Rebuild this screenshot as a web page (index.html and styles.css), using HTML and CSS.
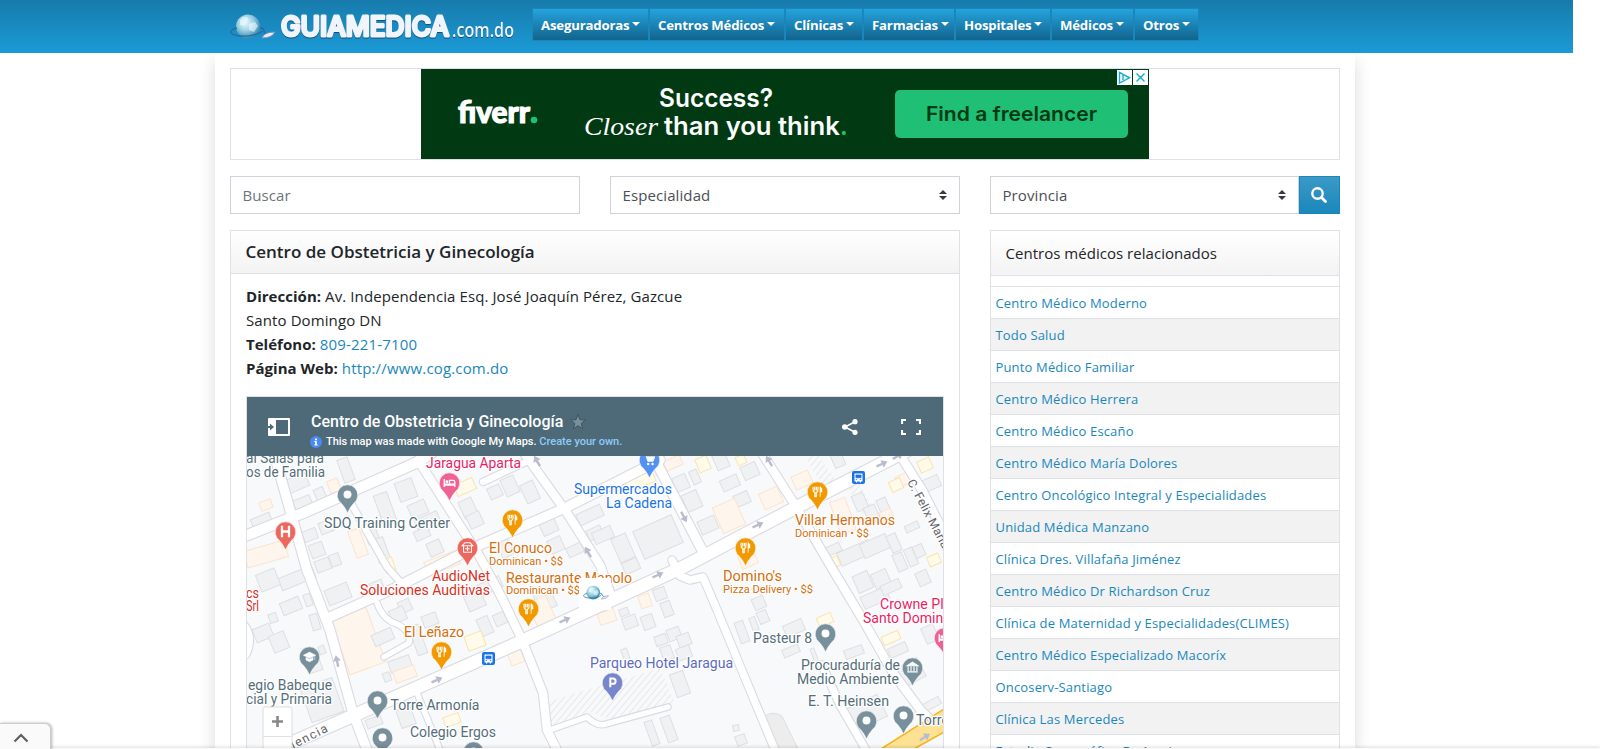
FILE: index.html
```html
<!DOCTYPE html>
<html lang="es">
<head>
<meta charset="utf-8">
<title>Centro de Obstetricia y Ginecología - GuiaMedica.com.do</title>
<link rel="stylesheet" href="styles.css">
</head>
<body>
<div class="page">
<header class="topbar">
  <svg class="logo" width="303" height="53" viewBox="0 0 303 53">
    <defs>
      <linearGradient id="lg" x1="0" y1="0" x2="0" y2="1"><stop offset="0" stop-color="#fff"/><stop offset="1" stop-color="#dbe4f3"/></linearGradient>
      <radialGradient id="globe" cx=".4" cy=".35" r=".7"><stop offset="0" stop-color="#e8f8fb"/><stop offset=".45" stop-color="#9fd3e6"/><stop offset="1" stop-color="#2a7fa8"/></radialGradient>
    </defs>
    <g id="emblem">
      <circle cx="18" cy="26.500" r="12" fill="url(#globe)"/>
      <path d="M10 20q3-4 7-3l2 3-4 2-1 4-4-1zM19 24l6-2 3 4-4 6-5-2z" fill="#f1fbfd" opacity=".6"/>
      <path d="M7 28C-2 30-1 35 10 36S31 33 32 31M30 28q4 0 4 3t6 3" fill="none" stroke="#256c9c" stroke-width="1.300"/>
      <path d="M32 38Q34 32 45 32Q42 38 32 38Z" fill="#e8edf9" stroke="#7d8fc2"/>
    </g>
    <text class="logo-name" x="51" y="36" textLength="168" lengthAdjust="spacingAndGlyphs">GUIAMEDICA</text>
    <text class="logo-tld" x="222" y="37" textLength="62" lengthAdjust="spacingAndGlyphs">.com.do</text>
  </svg>
  <nav class="nav">
    <a class="n1">Aseguradoras</a><a class="n2">Centros Médicos</a><a class="n3">Clínicas</a><a class="n4">Farmacias</a><a class="n5">Hospitales</a><a class="n6">Médicos</a><a class="n7">Otros</a>
  </nav>
</header>
<main class="container">
  <div class="adbox">
    <svg width="728" height="90" viewBox="0 0 728 90">
      <rect width="728" height="90" fill="#003912"/>
      <g fill="#fff">
        <text class="fiverr" x="37" y="54" textLength="72" lengthAdjust="spacingAndGlyphs">fiverr</text>
        <circle cx="113" cy="51" r="3.300" fill="#1dbf73"/>
        <text class="slogan" x="238" y="38" textLength="114" lengthAdjust="spacingAndGlyphs">Success?</text>
        <text class="closer" x="163" y="66" textLength="74" lengthAdjust="spacingAndGlyphs">Closer</text>
        <text class="slogan" x="243" y="66" textLength="184" lengthAdjust="spacingAndGlyphs">than you think<tspan fill="#1dbf73">.</tspan></text>
      </g>
      <rect x="474" y="21" width="233" height="48" rx="5" fill="#1fbf75"/>
      <text class="cta" x="505" y="52" textLength="171" lengthAdjust="spacingAndGlyphs">Find a freelancer</text>
      <path d="M696 1h15v15h-15zM712 1h15v15h-15z" fill="#fff"/>
      <path d="M698.500 3.500v10.500l10-5.200zM702 6v5M715.500 4.500l8 8M723.500 4.500l-8 8" fill="none" stroke="#10aed2" stroke-width="1.400"/>
    </svg>
  </div>
  <div class="grid">
    <div class="field ph">Buscar</div>
    <div class="field">Especialidad<svg width="8" height="10" viewBox="0 0 4 5"><path fill="#343a40" d="M2 0L0 2h4zm0 5L0 3h4z"/></svg></div>
    <div class="group">
      <div class="field">Provincia<svg width="8" height="10" viewBox="0 0 4 5"><path fill="#343a40" d="M2 0L0 2h4zm0 5L0 3h4z"/></svg></div>
      <button class="search" aria-label="Buscar"><svg width="16" height="16" viewBox="0 0 16 16"><circle cx="6.500" cy="6.500" r="5.200" fill="none" stroke="#fff" stroke-width="2.400"/><path d="M10.500 10.500l4 4" stroke="#fff" stroke-width="2.800" stroke-linecap="round"/></svg></button>
    </div>
    <section class="card main-card">
      <h1>Centro de Obstetricia y Ginecología</h1>
      <div class="info">
        <p><b>Dirección:</b> <span class="addr">Av. Independencia Esq. José Joaquín Pérez, Gazcue</span></p>
        <p>Santo Domingo DN</p>
        <p><b>Teléfono:</b> <a>809-221-7100</a></p>
        <p><b>Página Web:</b> <a>http://www.cog.com.do</a></p>
        <div class="mapframe">
          <div class="maphead">
            <svg class="panel-ico" width="22" height="18" viewBox="0 0 22 18"><path d="M1 0h20q1 0 1 1v16q0 1-1 1H1q-1 0-1-1V1q0-1 1-1zm7 2v14h12V2z" fill="#fff" fill-rule="evenodd"/><path d="M0 8h2V5.500L6 9l-4 3.500V10H0z" fill="#4e6a78"/></svg>
            <div class="maptitle">
              <div class="mt">Centro de Obstetricia y Ginecología<svg width="16" height="16" viewBox="0 0 16 16"><path d="M8 .5l2 5.200 5.500.3-4.300 3.400 1.400 5.400L8 11.700l-4.600 3.100 1.400-5.400L.5 6 6 5.700z" fill="#78909c" stroke="#3f5561"/></svg></div>
              <div class="ms"><svg width="12" height="12" viewBox="0 0 12 12"><circle cx="6" cy="6" r="6" fill="#4a8af4"/><path d="M5 2.500h2v1.700H5zM4.300 5h2.500v3.500h.9v1H4.300v-1h.8V6h-.8z" fill="#fff"/></svg>This map was made with Google My Maps. <span>Create your own.</span></div>
            </div>
            <svg class="share" width="16" height="16" viewBox="0 0 16 16"><path d="M13 2.700L3 8l10 5.300" fill="none" stroke="#fff" stroke-width="1.600"/><g fill="#fff"><circle cx="13" cy="2.700" r="2.600"/><circle cx="2.800" cy="8" r="2.800"/><circle cx="13" cy="13.300" r="2.600"/></g></svg>
            <svg class="full" width="20" height="16" viewBox="0 0 20 16"><path d="M1 5V1h4M15 1h4v4M19 11v4h-4M5 15H1v-4" fill="none" stroke="#fff" stroke-width="2.200"/></svg>
          </div>
          <svg id="map" width="696" height="293" viewBox="247 456 696 293"></svg>
        </div>
      </div>
    </section>
    <aside class="card side-card">
      <h2>Centros médicos relacionados</h2>
      <ul>
        <li>Centro Médico Moderno</li><li>Todo Salud</li><li>Punto Médico Familiar</li><li>Centro Médico Herrera</li><li>Centro Médico Escaño</li><li>Centro Médico María Dolores</li><li>Centro Oncológico Integral y Especialidades</li><li>Unidad Médica Manzano</li><li>Clínica Dres. Villafaña Jiménez</li><li>Centro Médico Dr Richardson Cruz</li><li>Clínica de Maternidad y Especialidades(CLIMES)</li><li>Centro Médico Especializado Macoríx</li><li>Oncoserv-Santiago</li><li>Clínica Las Mercedes</li><li>Estudio Sonográfico Dr Arroja</li>
      </ul>
    </aside>
  </div>
</main>
</div>
<div class="anchor-tab"><svg width="16" height="10" viewBox="0 0 16 10"><path d="M1.500 8.500L8 2l6.500 6.500" fill="none" stroke="#5f5f5f" stroke-width="2.200"/></svg></div>
<div class="anchor-bar"></div>
<script src="map.js"></script>
</body>
</html>
```

FILE: styles.css
```css
* { box-sizing: border-box; }
html, body { height: 749px; overflow: hidden; }
body { margin: 0; background: #fff; color: #212529; font: 15px/24px "Open Sans", "Noto Sans", sans-serif; letter-spacing: .1px; }
.page { width: 1573px; height: 749px; overflow: hidden; }
.topbar { position: relative; z-index: 2; height: 53px; padding-left: 230px; display: flex; align-items: flex-start; background: linear-gradient(#177bab, #1b9ad6); letter-spacing: 0; }
.logo { display: block; flex: none; }
.logo-name { font: 500 27px Inter, sans-serif; fill: url(#lg); stroke: #f0f4fb; stroke-width: 3; stroke-linejoin: round; filter: drop-shadow(0 1.5px .7px #134f7d); }
.logo-tld { font: 600 20px "Open Sans", sans-serif; fill: #eef3fc; filter: drop-shadow(0 1px .6px #134f7d); }
.nav { display: flex; gap: 2px; margin-top: 9px; }
.nav a { height: 31px; padding-left: 8px; display: flex; align-items: center; color: #fff; font-size: 13.2px; font-weight: 700; letter-spacing: -.18px; white-space: nowrap; background: linear-gradient(#25a3de, #12648d); box-shadow: 0 0 0 1px #1a87bb; }
.nav a::after { content: ""; margin: -2px 0 0 3px; border: 4px solid transparent; border-top-color: #fff; border-bottom: 0; }
.n1 { width: 115px; } .n2 { width: 134px; } .n3 { width: 76px; } .n4 { width: 90px; } .n5 { width: 94px; } .n6 { width: 81px; } .n7 { width: 63px; }
.container { width: 1140px; height: 696px; margin-left: 215px; padding: 15px 15px 0; background: #fff; box-shadow: 0 8px 16px rgba(0,0,0,.15); }
.adbox { height: 92px; border: 1px solid #dee2e6; display: flex; padding-left: 190px; letter-spacing: 0; }
.fiverr { font: 900 31px Lato, sans-serif; stroke: #fff; stroke-width: 1.2; }
.slogan { font: 600 25px Inter, sans-serif; }
.closer { font: italic 26px "Liberation Serif", serif; }
.cta { font: 600 20px Inter, sans-serif; fill: #003912; }
.grid { display: grid; grid-template-columns: 350px 350px 350px; gap: 16px 30px; margin-top: 16px; }
.field { height: 38px; border: 1px solid #ced4da; padding: 0 12px 0 11.5px; display: flex; align-items: center; justify-content: space-between; color: #495057; flex: 1; }
.ph { color: #6c757d; }
.group { display: flex; }
.search { width: 41px; height: 38px; border: 1px solid #1a87bb; background: linear-gradient(#3c99c6, #1a87bb); display: flex; align-items: center; justify-content: center; padding: 0 2px 0 0; }
.card { border: 1px solid #dee2e6; height: 560px; }
.main-card { grid-column: 1 / 3; }
h1, h2 { margin: 0; padding: 0 15px 0 14.5px; background: linear-gradient(#fff, #f3f3f3); border-bottom: 1px solid #dee2e6; }
h1 { height: 43px; font-size: 17px; line-height: 42px; font-weight: 600; letter-spacing: 0; }
h2 { height: 45px; font-size: 15px; line-height: 44px; font-weight: 400; letter-spacing: .03px; }
.info { padding: 10px 15px 0; }
.info p { margin: 0; }
.info b { letter-spacing: .03px; }
.info a { letter-spacing: .16px; }
.info a, .side-card li { color: #1a87bb; }
.mapframe { margin-top: 16px; width: 698px; height: 360px; border: 1px solid #dee2e6; letter-spacing: 0; }
.maphead { height: 59px; display: flex; background: #4e6a78; color: #fff; font-family: Roboto, sans-serif; }
.panel-ico { margin: 21px 0 0 21px; }
.maptitle { width: 531px; margin-left: 21px; }
.mt { display: flex; align-items: center; gap: 7px; height: 22px; margin-top: 14px; font-size: 16px; font-weight: 500; }
.ms { display: flex; align-items: center; height: 16px; margin-top: 1px; font-size: 11px; font-weight: 500; margin-left: -1px; white-space: pre; }
.ms svg { margin-right: 4px; }
.ms span { color: #90caf9; }
.share { margin-top: 22px; }
.full { margin: 22px 0 0 43px; }
#map { display: block; font-family: Roboto, sans-serif; background: #f8f9fa; }
.side-card ul { list-style: none; margin: 10px 0 0; padding: 0; }
.side-card li { height: 32px; padding-left: 4.500px; border-top: 1px solid #dee2e6; font-size: 13px; line-height: 32px; letter-spacing: .16px; }
.side-card li:nth-child(even) { background: #f2f2f2; }
.anchor-tab { position: absolute; z-index: 3; left: 0; top: 723px; width: 51px; height: 26px; border: 1px solid #ccc; border-left: 0; border-bottom: 0; border-radius: 0 6px 0 0; background: #fafafa; box-shadow: 1px 0 3px rgba(0,0,0,.3); padding: 9px 0 0 13px; }
.anchor-tab svg { display: block; }
.anchor-bar { position: absolute; z-index: 2; left: 0; top: 748px; width: 1600px; height: 1px; background: #fafafa; box-shadow: 0 -1px 3px rgba(0,0,0,.25); }
```

FILE: map.js
```js
const svg = [];
const roads = [
  [11, "M240 538L303 513L420 461L435 450"],
  [10, "M273 450L307 570L330 630L353 713L367 750"],
  [7, "M345 490L353 507L387 567L402 584"],
  [10, "M330 617L395 588L473 548L565 508L660 460"],
  [9, "M418 460L480 557L503 600L523 642L543 693L547 730L557 750"],
  [9, "M522 450L567 513L600 565L612 598"],
  [10, "M653 456L702 550"],
  [9, "M760 450L795 505L833 570L863 620L893 673L922 712L940 728"],
  [9, "M897 450L922 490L950 545"],
  [8, "M672 560L680 576L690 580L703 577L717 610L743 673L775 750"],
  [8, "M822 665L840 705L866 750"],
  [6, "M547 731L587 717Q597 727 606 724L668 707"],
  [6, "M417 693L440 750"],
  [6, "M377 603Q383 620 397 624Q412 632 409 643L384 657"],
  [7, "M483 482L532 459"],
  [7, "M240 620Q256 635 246 655"],
  [13, "M280 748L357 714L520 642L683 567L797 507L910 449"]
];
// centre x, centre y, width, height, rotation, fill kind
const lots = [
  [346,470,11,24,-20,0],[303,504,18,13,-22,0],[297,483,22,14,-24,0],[320,494,10,12,-24,0],[334,486,11,13,-20,1],[266,505,12,9,-20,1],[262,522,20,13,-22,0],
  [310,535,14,11,-20,0],[326,527,13,12,-20,0],[317,550,14,14,-20,0],[323,565,15,12,-20,0],[335,560,10,12,-20,0],[385,508,14,30,-20,0],[406,490,18,20,-20,0],[418,509,18,14,-24,0],[428,522,24,14,-24,0],[422,534,15,10,-24,0],[435,548,14,14,-24,0],
  [358,543,12,28,-20,1],[371,533,12,20,-20,0],[381,550,12,24,-20,0],[389,565,10,14,-20,2],[266,554,42,17,-16,1],[442,563,34,14,-20,1],[468,508,14,18,-25,0],[510,486,14,18,-25,0],[530,492,14,20,-25,0],[475,520,14,14,-25,0],[465,487,20,12,-25,2],[495,492,13,12,-25,0],
  [505,548,12,18,-25,0],[548,525,16,18,-25,0],[556,545,14,14,-25,0],[575,550,16,10,-25,0],[590,515,26,12,-25,0],[595,533,15,11,-25,0],
  [358,641,38,58,-20,1],[338,594,24,16,-22,0],[376,586,14,9,-22,0],[297,578,36,13,-22,0],[268,580,20,18,-22,0],[291,606,20,13,-22,0],[263,633,18,14,-22,0],[308,600,7,12,-20,0],[273,618,8,9,-20,0],[315,622,8,16,-16,0],[279,642,16,18,-22,0],[314,665,14,14,-20,0],[322,650,6,8,-20,0],
  [405,606,12,12,-24,0],[383,637,21,12,-24,0],[398,615,15,14,-24,0],[418,640,10,30,-20,0],[430,620,15,12,-20,0],[475,601,18,16,-24,0],[485,626,12,18,-24,0],[500,619,12,12,-24,0],[490,586,24,12,-24,0],[475,641,18,15,-20,2],[400,664,22,12,-20,0],[405,674,22,12,-20,1],[387,677,7,9,-20,0],[374,722,16,9,-20,0],[406,717,15,19,-20,0],[452,720,16,10,-20,2],[322,700,34,36,-20,0],
  [545,600,18,20,-24,0],[542,612,20,28,-24,1],[516,657,14,14,-20,1],[607,617,17,12,-18,1],[645,601,11,13,-18,1],[660,594,12,12,-20,0],[667,609,10,15,-20,0],[648,622,12,14,-20,0],[630,622,14,12,-20,0],[624,612,9,7,-20,0],[661,640,12,10,-20,0],[674,634,13,12,-20,0],[684,640,13,12,-20,0],[667,653,11,14,-20,0],[684,653,14,12,-20,0],[680,684,14,24,-20,0],[626,656,6,15,-20,0],[652,733,8,25,-20,0],[669,729,10,26,-20,0],
  [673,463,18,10,-24,1],[640,481,30,12,-22,2],[703,464,12,14,-24,2],[721,461,13,16,-24,0],[741,460,9,9,-24,2],[750,471,16,14,-24,0],[681,483,14,15,-24,0],[695,477,8,14,-24,0],[730,483,18,12,-24,0],[692,501,16,18,-24,0],[742,499,15,12,-24,0],[708,525,18,14,-24,0],[729,516,24,28,-24,1],[771,498,20,17,-24,1],[658,537,42,30,-24,0],[623,548,16,26,-24,0],[631,566,16,12,-24,0],[603,535,20,12,-24,0],[802,480,18,14,-24,1],[838,460,11,14,-24,0],
  [925,465,13,12,-24,2],[905,479,17,11,-24,1],[896,485,12,11,-24,2],[930,484,20,12,-24,0],[843,516,16,34,-20,1],[860,502,12,17,-24,0],[872,514,12,17,-24,0],[883,505,10,13,-24,0],[887,516,12,12,-24,1],[912,527,14,7,-24,0],[834,549,14,9,-24,0],[855,553,34,14,-24,0],[875,546,28,15,-24,0],[894,543,10,18,-24,0],[835,562,8,10,-24,2],[900,562,10,18,-24,0],[911,557,9,18,-24,0],[919,551,10,12,-24,0],[934,560,12,10,-24,2],[748,560,17,13,-24,1],
  [863,582,16,18,-24,0],[881,579,16,16,-24,0],[875,598,27,13,-24,0],[891,587,20,10,-24,0],[923,578,12,14,-24,0],[891,638,18,9,-24,2],[898,650,19,10,-24,0],[930,634,13,17,-24,0],[794,628,20,12,-24,0],[791,651,17,8,-24,0],[854,652,19,9,-20,0],[815,657,4,18,-20,0],[742,632,9,22,-20,0],[754,624,6,14,-20,0],[763,617,10,12,-24,0],[759,603,12,12,-24,0],[825,620,15,10,-24,2],[911,672,23,21,-28,0],[930,705,22,8,-28,0],[866,713,36,24,-26,0],[736,728,6,6,-10,0],[741,740,10,10,-20,0]
];
const kinds = [["#f0f1f3","#dddfe3"],["#fef5ec","#fde3cd"],["#fffbea","#fbe3ae"]];

svg.push(`<defs><pattern id="hatch" width="5" height="5" patternUnits="userSpaceOnUse" patternTransform="rotate(40)"><path d="M0 0V5" stroke="#d5d7db"/></pattern></defs>`);
svg.push(`<rect x="247" y="456" width="697" height="293" fill="#f8f9fa"/>`);
svg.push(`<path d="M546 702L660 668L675 703L620 722L590 712L550 730ZM805 458l12-4 20 28-12 6zM848 486l10-4 18 32-10 6z" fill="url(#hatch)"/>`);
for (const [x, y, w, h, a, k] of lots)
  svg.push(`<rect x="${x - w / 2}" y="${y - h / 2}" width="${w}" height="${h}" transform="rotate(${a} ${x} ${y})" fill="${kinds[k][0]}" stroke="${kinds[k][1]}"/>`);
svg.push(`<path d="M762 720q5-9 16-6l4 2 16 33h-28z" fill="#ededee" stroke="#dddfe3"/>`);
for (const [w, d] of roads) svg.push(`<path d="${d}" fill="none" stroke="#d9dbe2" stroke-width="${w + 1.6}" stroke-linecap="round" stroke-linejoin="round"/>`);
for (const [w, d] of roads) svg.push(`<path d="${d}" fill="none" stroke="#fff" stroke-width="${w - .6}" stroke-linecap="round" stroke-linejoin="round"/>`);
svg.push(`<path d="M881 749L944 709V732L914 749Z" fill="#fde293" stroke="#f9b21d" stroke-width="1.500"/>`);
for (const [x, y, a] of [[337,661,-102],[437,680,-24],[565,620,-24],[537,461,-120],[588,552,-120],[684,517,62],[758,525,-24],[769,461,-120],[882,464,-24],[898,456,-30],[658,575,-24],[925,737,-32]])
  svg.push(`<path d="M-6-1.200H0V-4L6 0L0 4V1.200H-6Z" transform="translate(${x} ${y}) rotate(${a})" fill="#b8bccf"/>`);

const glyphs = {
  dot: `<circle r="4.500" fill="#fff"/>`,
  food: `<path d="M-5-5.500V-1.500Q-5 .5-3 1V6h1.600V1Q.5.500.5-1.500V-5.500M-3.200-5.500V-1M-1.300-5.500V-1" fill="none" stroke="#fff" stroke-width="1.300"/><path d="M3 6V-5.500Q5.500-4 5 .5H3" fill="#fff" stroke="#fff"/>`,
  bed: `<path d="M-6-4V5M-6 3H6V5M6 3V-.5Q6-2.500 4-2.500H0V2M-6 2H6" fill="none" stroke="#fff" stroke-width="1.500"/><circle cx="-3" cy="-.8" r="1.700" fill="#fff"/>`,
  h: `<path d="M-4-6.500V6.500M4-6.500V6.500M-4 0H4" stroke="#fff" stroke-width="2.600"/>`,
  clinic: `<path d="M-4.500-2V5.500H4.500V-2M-6-2H6L3-5.500H-3ZM0-1V4M-2.500 1.500H2.500" fill="none" stroke="#fff" stroke-width="1.200"/>`,
  cart: `<path d="M-6-5H-4L-2 2H4L6-3H-3" fill="#fff" stroke="#fff"/><circle cx="-1.500" cy="5" r="1.400" fill="#fff"/><circle cx="3.500" cy="5" r="1.400" fill="#fff"/>`,
  school: `<path d="M-7-1.500L0-5L7-1.500L0 2ZM-4 1V4L0 6L4 4V1L0 3ZM6-1V4" fill="#fff" stroke="#fff" stroke-width=".6"/>`,
  p: `<path d="M-2.500 5.500V-4.500H.5Q3.500-4.500 3.500-1.500T.5 1.500H-2.500" fill="none" stroke="#fff" stroke-width="2.300"/>`,
  bank: `<path d="M-6-2L0-6L6-2ZM-5-1V4M-1.700-1V4M1.700-1V4M5-1V4M-6 5H6" fill="#fff" stroke="#fff" stroke-width="1.300"/>`
};
const pins = [[347.500,495,"#78909c","dot"],[285.500,532,"#ee675c","h"],[449.500,483,"#f06292","bed"],[512.500,520,"#f29900","food"],[467.500,548,"#ee675c","clinic"],[649.500,460,"#5491f5","cart"],[817.500,492,"#f29900","food"],[745.500,548,"#f29900","food"],[528.500,609,"#f29900","food"],[441.500,652,"#f29900","food"],[309.500,657,"#78909c","school"],[377.500,701,"#78909c","dot"],[382.500,738,"#78909c","dot"],[473.500,752,"#78909c","dot"],[612.500,683,"#7986cb","p"],[825.500,634,"#78909c","dot"],[912.500,668,"#78909c","bank"],[866.500,721,"#78909c","dot"],[903.500,716,"#78909c","dot"],[944.500,638,"#f06292","bed"]];
for (const [x, y, c, g] of pins)
  svg.push(`<g transform="translate(${x} ${y})"><path d="M0 18Q-2 13-6 8.500A10.300 10.300 0 1 1 6 8.500Q2 13 0 18Z" fill="${c}" stroke="#fff" stroke-width=".6"/><g transform="translate(0 -.5) scale(.88)">${glyphs[g]}</g></g>`);
for (const [x, y] of [[488.500,658.500],[858.500,477.500]])
  svg.push(`<g transform="translate(${x} ${y})"><rect x="-6.500" y="-6.500" width="13" height="13" rx="2" fill="#1a73e8"/><path d="M-4-4H4V4H2.500V5H1.200V4H-1.200V5H-2.500V4H-4Z" fill="#fff"/><path d="M-2.600-2.500H2.600V.3H-2.600ZM-2.800 2h1.400M1.400 2h1.400" fill="#1a73e8" stroke="#1a73e8" stroke-width=".7"/></g>`);

// text, x, baseline, width, size, colour
const G = "#546e7a", R = "#d93025", O = "#d56e0c", P = "#e91e63", B = "#1a73e8", V = "#5c6bc0";
const labels = [
  ["al Salas para",246,463,78,14,G],["os de Familia",246,477,79,14,G],["SDQ Training Center",324,528,126,14,G],["Jaragua Aparta",426,468,95,14,P],
  ["El Conuco",489,553,63,14,O],["Dominican • $$",489,565,74,11.500,O],["Supermercados",574,494,98,14,B],["La Cadena",606,508,66,14,B],
  ["Villar Hermanos",795,525,100,14,O],["Dominican • $$",795,537,74,11.500,O],["Domino's",723,581,59,14,O],["Pizza Delivery • $$",723,593,90,11.500,O],
  ["AudioNet",432,581,58,14,R],["Soluciones Auditivas",360,595,130,14,R],["cs",246,598,13,14,R],["Srl",246,611,13,14,R],["El Leñazo",404,637,60,14,O],
  ["Restaurante Manolo",506,583,126,14,O],["Dominican • $$",506,594,74,11.500,O],["egio Babeque",248,690,84,14,G],["cial y Primaria",246,704,86,14,G],["Torre Armonía",390.500,710,89,14,G],["Colegio Ergos",410,737,86,14,G],
  ["Parqueo Hotel Jaragua",590,668,143,14,V],["Pasteur 8",753,643,59,14,G],["Procuraduría de",801,670,99,14,G],["Medio Ambiente",797,684,102,14,G],["E. T. Heinsen",808,706,81,14,G],["Torre",916,725,33,14,G],["Crowne Plaza",880,609,86,14,P],["Santo Domingo",863,623,96,14,P]
];
for (const [t, x, y, w, s, c] of labels)
  svg.push(`<text x="${x}" y="${y}" textLength="${w}" lengthAdjust="spacingAndGlyphs" font-size="${s}" fill="${c}" stroke="#fff" stroke-width="2.500" paint-order="stroke" stroke-linejoin="round">${t}</text>`);
svg.push(`<text transform="translate(907 482) rotate(62)" font-size="12" fill="#5f6368" stroke="#fff" stroke-width="2" paint-order="stroke" textLength="76">C. Felix María</text>`);
svg.push(`<text transform="translate(268 762) rotate(-27)" font-size="12.500" fill="#5f6368" stroke="#fff" stroke-width="2" paint-order="stroke" textLength="68">pendencia</text>`);
svg.push(`<rect x="579" y="578" width="32" height="32" fill="#fff"/><use href="#emblem" transform="translate(583 577.500) scale(.57)"/>`);
svg.push(`<rect x="263" y="707" width="29" height="50" rx="2" fill="#fff" stroke="#ddd"/><path d="M263 736.500H292" stroke="#e0e0e0"/><path d="M277.500 716V727M272 721.500H283" stroke="#888" stroke-width="2.600"/>`);
document.getElementById("map").innerHTML = svg.join("");
```
